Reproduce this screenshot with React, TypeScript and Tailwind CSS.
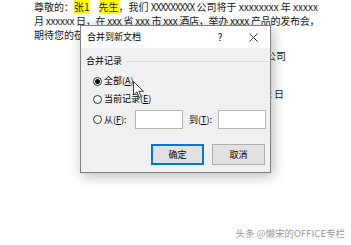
import React from 'react';

const font = { fontFamily: '"Noto Sans CJK SC", "Liberation Sans", sans-serif' };

const Radio = ({ checked }: { checked?: boolean }) => (
  <span className="w-[9px] h-[9px] rounded-full border border-[#333] bg-white flex items-center justify-center shrink-0">
    {checked ? <span className="w-[5px] h-[5px] rounded-full bg-[#111]" /> : null}
  </span>
);

const Cursor = () => (
  <svg width="12" height="18" viewBox="0 0 12 18" className="absolute left-[133px] top-[81px]">
    <path
      d="M0.5 0.5 L0.5 14 L3.8 11 L6.2 16.5 L8.2 15.6 L5.9 10.3 L10.5 10.3 Z"
      fill="#fff"
      stroke="#222"
      strokeWidth="0.9"
      strokeLinejoin="round"
    />
  </svg>
);

export default function App() {
  return (
    <div className="relative w-[351px] h-[245px] bg-white overflow-hidden" style={font}>
      <div className="pl-[34px] text-[10px] leading-[14px] text-[#1a1a1a]">
        <div className="whitespace-nowrap">
          尊敬的：<span className="bg-[#ffff00]">张1</span>
          <span className="ml-[9px] bg-[#ffff00]">先生</span>，我们{' '}
          <span className="tracking-[-0.9px]">XXXXXXXXX</span> 公司将于 xxxxxxxx 年 xxxxx
        </div>
        <div className="whitespace-nowrap tracking-[-0.25px]">月 xxxxxx 日，在 xxx 省 xxx 市 xxx 酒店，举办 xxxx 产品的发布会，</div>
        <div className="whitespace-nowrap">期待您的莅临！</div>
        <div className="mt-[7px] w-[252px] text-right whitespace-nowrap">XXXXXXXXX 公司</div>
        <div className="mt-[24px] w-[250px] text-right whitespace-nowrap">2019 年 xx 月 xx 日</div>
      </div>

      <div className="absolute left-[80px] top-[25px] w-[191px] h-[148px] border border-[#7f7f7f] bg-[#f0f0f0] flex flex-col shadow-[2px_3px_12px_rgba(0,0,0,0.28)] text-[9px] leading-[12px] text-black">
        <div className="h-[22px] bg-white flex items-center pl-[6px] shrink-0">
          <span className="flex-1">合并到新文档</span>
          <span className="w-[10px] text-center mr-[24px] text-[10px]">?</span>
          <svg width="9" height="9" viewBox="0 0 9 9" className="mr-[12px]">
            <path d="M0.5 0.5 L8.5 8.5 M8.5 0.5 L0.5 8.5" stroke="#222" strokeWidth="0.9" />
          </svg>
        </div>
        <div className="flex flex-col flex-1">
          <div className="mt-[6px] h-[14px] flex items-center pl-[5px] pr-[3px]">
            <span>合并记录</span>
            <span className="flex-1 ml-[5px] h-px bg-[#dcdcdc]" />
          </div>
          <div className="mt-[6px] h-[14px] flex items-center pl-[12px] gap-[2px]">
            <Radio checked />
            <span>
              全部(<span className="underline">A</span>)
            </span>
          </div>
          <div className="mt-[4px] h-[14px] flex items-center pl-[12px] gap-[2px]">
            <Radio />
            <span>
              当前记录(<span className="underline">E</span>)
            </span>
          </div>
          <div className="mt-[4px] h-[19px] flex items-center pl-[12px]">
            <Radio />
            <span className="ml-[2px] w-[31px]">
              从(<span className="underline">F</span>):
            </span>
            <span className="w-[48px] h-[19px] bg-white border border-[#b5b5b5]" />
            <span className="ml-[6px] w-[29px]">
              到(<span className="underline">T</span>):
            </span>
            <span className="w-[48px] h-[19px] bg-white border border-[#b5b5b5]" />
          </div>
          <div className="mt-[15px] flex justify-end gap-[8px] pr-[5px]">
            <button className="w-[53px] h-[21px] bg-[#e1e1e1] border-2 border-[#0078d7] text-[9px] leading-[12px]">
              确定
            </button>
            <button className="w-[53px] h-[21px] bg-[#e1e1e1] border border-[#adadad] text-[9px] leading-[12px]">
              取消
            </button>
          </div>
        </div>
      </div>

      <Cursor />

      <div className="absolute right-[6px] bottom-[6px] text-[9.5px] leading-[12px] text-[#9a9a9a] whitespace-nowrap [text-shadow:0_0_2px_#fff]">
        头条 @懒宋的OFFICE专栏
      </div>
    </div>
  );
}
